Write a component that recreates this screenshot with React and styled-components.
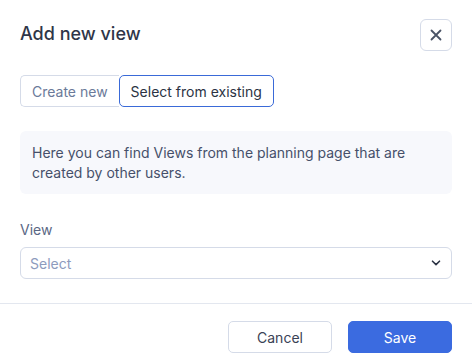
import React from 'react';
import styled, { createGlobalStyle } from 'styled-components';

const GlobalStyle = createGlobalStyle`
  html, body {
    margin: 0;
    padding: 0;
    background: #ffffff;
    font-family: Inter, "Noto Sans", sans-serif;
  }
  * {
    box-sizing: border-box;
  }
`;

const Dialog = styled.div`
  width: 472px;
  height: 364px;
  background: #ffffff;
  display: flex;
  flex-direction: column;
`;

const Body = styled.div`
  padding: 19px 20px 24px 20px;
  display: flex;
  flex-direction: column;
`;

const HeaderRow = styled.div`
  display: flex;
  justify-content: space-between;
  align-items: flex-start;
`;

const Title = styled.h2`
  margin: 4px 0 0 0;
  font-size: 18px;
  font-weight: 500;
  line-height: 22px;
  color: #2f3648;
`;

const CloseButton = styled.button`
  width: 32px;
  height: 32px;
  border: 1px solid #d5dbe8;
  border-radius: 6px;
  background: #ffffff;
  display: flex;
  align-items: center;
  justify-content: center;
  padding: 0;
  color: #4a5366;
  cursor: pointer;
`;

const Tabs = styled.div`
  display: flex;
  margin-top: 24px;
`;

const Tab = styled.button`
  height: 32px;
  padding: 0 11px;
  font-family: inherit;
  font-size: 14px;
  background: #ffffff;
  color: ${p => (p.$active ? '#2b3344' : '#6b7a99')};
  border: 1px solid ${p => (p.$active ? '#3a6ad8' : '#d5dbe8')};
  border-radius: ${p => (p.$active ? '5px' : '5px 0 0 5px')};
  ${p => (p.$active ? '' : 'border-right: none;')}
  cursor: pointer;
`;

const Info = styled.div`
  margin-top: 24px;
  background: #f7f8fc;
  border-radius: 6px;
  padding: 12px 12px 11px 12px;
  font-size: 14px;
  line-height: 20px;
  color: #46506a;
`;

const Label = styled.div`
  margin-top: 26px;
  font-size: 14px;
  line-height: 20px;
  color: #5a6784;
`;

const SelectBox = styled.div`
  margin-top: 7px;
  height: 32px;
  border: 1px solid #d5dbe8;
  border-radius: 6px;
  display: flex;
  align-items: center;
  justify-content: space-between;
  padding: 0 10px 0 9px;
  font-size: 14px;
  color: #8d9bbd;
`;

const Divider = styled.div`
  height: 1px;
  background: #e3e7ef;
`;

const Footer = styled.div`
  display: flex;
  justify-content: flex-end;
  gap: 16px;
  padding: 17px 20px 0 20px;
`;

const FooterButton = styled.button`
  width: 104px;
  height: 32px;
  border-radius: 5px;
  font-family: inherit;
  font-size: 14px;
  cursor: pointer;
  border: 1px solid ${p => (p.$primary ? '#3b6be0' : '#d5dbe8')};
  background: ${p => (p.$primary ? '#3b6be0' : '#ffffff')};
  color: ${p => (p.$primary ? '#ffffff' : '#3a4255')};
`;

export default function App() {
  return (
    <>
      <GlobalStyle />
      <Dialog>
        <Body>
          <HeaderRow>
            <Title>Add new view</Title>
            <CloseButton aria-label="Close">
              <svg width="12" height="12" viewBox="0 0 12 12" fill="none">
                <path d="M1.5 1.5L10.5 10.5M10.5 1.5L1.5 10.5" stroke="currentColor" strokeWidth="1.8" strokeLinecap="round" />
              </svg>
            </CloseButton>
          </HeaderRow>
          <Tabs>
            <Tab>Create new</Tab>
            <Tab $active>Select from existing</Tab>
          </Tabs>
          <Info>
            Here you can find Views from the planning page that are created by other users.
          </Info>
          <Label>View</Label>
          <SelectBox>
            <span>Select</span>
            <svg width="10" height="6" viewBox="0 0 10 6" fill="none">
              <path d="M1.5 1.2L5 4.6L8.5 1.2" stroke="#2b3344" strokeWidth="1.6" strokeLinecap="round" strokeLinejoin="round" />
            </svg>
          </SelectBox>
        </Body>
        <Divider />
        <Footer>
          <FooterButton>Cancel</FooterButton>
          <FooterButton $primary>Save</FooterButton>
        </Footer>
      </Dialog>
    </>
  );
}
